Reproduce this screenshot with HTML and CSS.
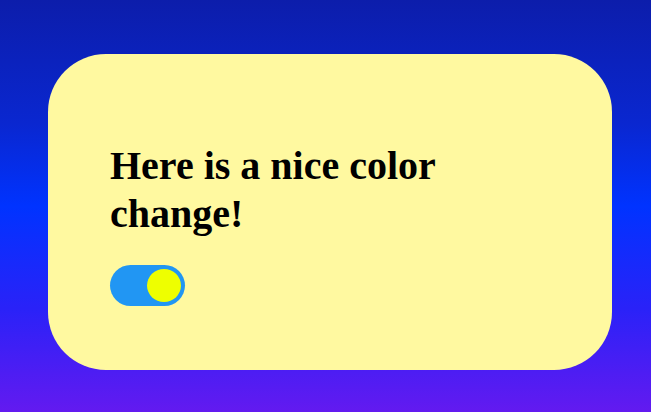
FILE: index.html
```html
<!DOCTYPE html>
<html>
<head>
<meta charset="utf-8">
<link rel="stylesheet" href="styles.css">
</head>
<body>
<div class="card">
  <h1 class="title">Here is a nice color change!</h1>
  <label class="switch">
    <input type="checkbox" checked>
    <span class="track"><span class="knob"></span></span>
  </label>
</div>
</body>
</html>
```
FILE: styles.css
```css
html, body {
  margin: 0;
  height: 100%;
}
body {
  background: linear-gradient(to bottom, #0c1dab 0%, #0a27d0 30%, #0033ff 50%, #2a22f8 75%, #631af0 100%);
  padding: 54px 39px 42px 48px;
  box-sizing: border-box;
  font-family: "Liberation Serif", "Times New Roman", serif;
}
.card {
  width: 564px;
  height: 316px;
  box-sizing: border-box;
  background: #fff9a0;
  border-radius: 58px;
  padding: 88px 62px 0 62px;
}
.title {
  margin: 0 0 27px;
  font-size: 40px;
  line-height: 48px;
  font-weight: bold;
  color: #000;
}
.switch {
  display: inline-block;
}
.switch input {
  display: none;
}
.track {
  display: flex;
  justify-content: flex-end;
  align-items: center;
  width: 75px;
  height: 41px;
  box-sizing: border-box;
  padding: 0 4px 0 0;
  background: #2196f3;
  border-radius: 21px;
}
.knob {
  width: 34px;
  height: 33px;
  border-radius: 50%;
  background: #eeff00;
}
```
